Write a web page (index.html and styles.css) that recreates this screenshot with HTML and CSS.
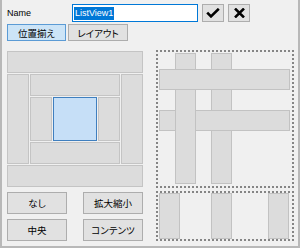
FILE: index.html
```html
<!DOCTYPE html>
<html lang="ja">
<head>
    <meta charset="UTF-8">
    <meta name="viewport" content="width=device-width, initial-scale=1.0">
    <title>Dock settings</title>
    <link rel="stylesheet" href="styles.css">
</head>
<body>
    <div class="window">
        <div class="header">
            <span class="label">Name</span>
            <div class="input"><span class="sel">ListView1</span></div>
            <button class="icon-btn" title="OK">
                <svg width="14" height="10" viewBox="0 0 14 10"><path d="M1.2 4.6 L5 8.4 L12.8 0.8" fill="none" stroke="#000" stroke-width="2.6"/></svg>
            </button>
            <button class="icon-btn" title="Cancel">
                <svg width="11" height="10" viewBox="0 0 11 10"><path d="M1 0.5 L10 9.5 M10 0.5 L1 9.5" fill="none" stroke="#000" stroke-width="2.5"/></svg>
            </button>
        </div>

        <div class="tabs">
            <button class="tab active">位置揃え</button>
            <button class="tab">レイアウト</button>
        </div>

        <div class="main">
            <div class="left">
                <div class="dock">
                    <div class="cell top"></div>
                    <div class="cell side-l"></div>
                    <div class="cell in-top"></div>
                    <div class="cell side-r"></div>
                    <div class="cell in-l"></div>
                    <div class="cell fill"></div>
                    <div class="cell in-r"></div>
                    <div class="cell in-bottom"></div>
                    <div class="cell bottom"></div>
                </div>
                <div class="actions">
                    <button class="btn">なし</button>
                    <button class="btn">拡大縮小</button>
                    <button class="btn">中央</button>
                    <button class="btn">コンテンツ</button>
                </div>
            </div>

            <div class="right">
                <div class="canvas big">
                    <div class="bar v" style="left: 55px;"></div>
                    <div class="bar h" style="top: 60px;"></div>
                    <div class="bar v" style="left: 19px;"></div>
                    <div class="bar h" style="top: 19px;"></div>
                </div>
                <div class="canvas small">
                    <div class="bar col" style="left: 3px;"></div>
                    <div class="bar col" style="left: 55px;"></div>
                    <div class="bar col" style="left: 112px;"></div>
                </div>
            </div>
        </div>
    </div>
</body>
</html>
```

FILE: styles.css
```css
html, body {
    margin: 0;
    padding: 0;
}
body {
    font-family: "Liberation Sans", "Noto Sans CJK JP", sans-serif;
    font-size: 9px;
    color: #000;
    background: #f0f0f0;
}
button {
    font: inherit;
    color: inherit;
    margin: 0;
    padding: 0;
    box-sizing: border-box;
}
.window {
    width: 300px;
    height: 248px;
    box-sizing: border-box;
    background: #f0f0f0;
    border: 2px solid #b8b8b8;
    border-top: none;
    padding: 4px 0 0 5px;
}

/* header row */
.header {
    display: flex;
    align-items: center;
    height: 18px;
}
.label {
    width: 65px;
}
.input {
    width: 126px;
    height: 18px;
    box-sizing: border-box;
    border: 1px solid #0078d7;
    background: #fff;
    display: flex;
    align-items: center;
    padding-left: 1px;
}
.sel {
    background: #0078d7;
    color: #fff;
    line-height: 13px;
    padding: 0 1px;
}
.icon-btn {
    width: 22px;
    height: 18px;
    margin-left: 4px;
    background: #e1e1e1;
    border: 1px solid #adadad;
    display: flex;
    align-items: center;
    justify-content: center;
}

/* tabs */
.tabs {
    display: flex;
    gap: 2px;
    margin-top: 2px;
}
.tab {
    width: 59px;
    height: 17px;
    background: #e1e1e1;
    border: 1px solid #adadad;
    font-size: 9.5px;
    font-feature-settings: "palt";
}
.tab + .tab {
    width: 60px;
}
.tab.active {
    background: #cce4f7;
    border-color: #5b9bd5;
}

/* main area */
.main {
    display: flex;
    gap: 13px;
    margin-top: 9px;
}
.left {
    width: 136px;
    padding-top: 1px;
}
.dock {
    display: grid;
    grid-template-columns: 22px 22px 44px 22px 22px;
    grid-template-rows: 22px 22px 44px 22px 22px;
    gap: 1px;
}
.cell {
    background: #dcdcdc;
    border: 1px solid #c4c4c4;
    box-sizing: border-box;
}
.top { grid-column: 1 / 6; grid-row: 1; }
.bottom { grid-column: 1 / 6; grid-row: 5; }
.side-l { grid-column: 1; grid-row: 2 / 5; }
.side-r { grid-column: 5; grid-row: 2 / 5; }
.in-top { grid-column: 2 / 5; grid-row: 2; }
.in-bottom { grid-column: 2 / 5; grid-row: 4; }
.in-l { grid-column: 2; grid-row: 3; }
.in-r { grid-column: 4; grid-row: 3; }
.fill {
    grid-column: 3;
    grid-row: 3;
    background: #c6dff7;
    border-color: #3f7fbf;
}

.actions {
    display: grid;
    grid-template-columns: 60px 60px;
    grid-auto-rows: 22px;
    column-gap: 16px;
    row-gap: 5px;
    margin-top: 5px;
}
.btn {
    background: #e1e1e1;
    border: 1px solid #adadad;
    font-size: 9.5px;
    font-feature-settings: "palt";
}

/* layout preview */
.right {
    width: 138px;
}
.canvas {
    position: relative;
    background:
        repeating-linear-gradient(90deg, #858585 0 2px, transparent 2px 4px) top left / 100% 2px no-repeat,
        repeating-linear-gradient(90deg, #858585 0 2px, transparent 2px 4px) bottom left / 100% 2px no-repeat,
        repeating-linear-gradient(180deg, #858585 0 2px, transparent 2px 4px) top left / 2px 100% no-repeat,
        repeating-linear-gradient(180deg, #858585 0 2px, transparent 2px 4px) top right / 2px 100% no-repeat;
}
.big {
    height: 138px;
}
.small {
    height: 50px;
    margin-top: 3px;
}
.bar {
    position: absolute;
    background: #dcdcdc;
    border: 1px solid #c2c2c2;
    box-sizing: border-box;
}
.bar.v {
    top: 3px;
    width: 21px;
    height: 131px;
}
.bar.h {
    left: 3px;
    width: 131px;
    height: 21px;
}
.bar.col {
    top: 2px;
    width: 21px;
    height: 46px;
}
```
